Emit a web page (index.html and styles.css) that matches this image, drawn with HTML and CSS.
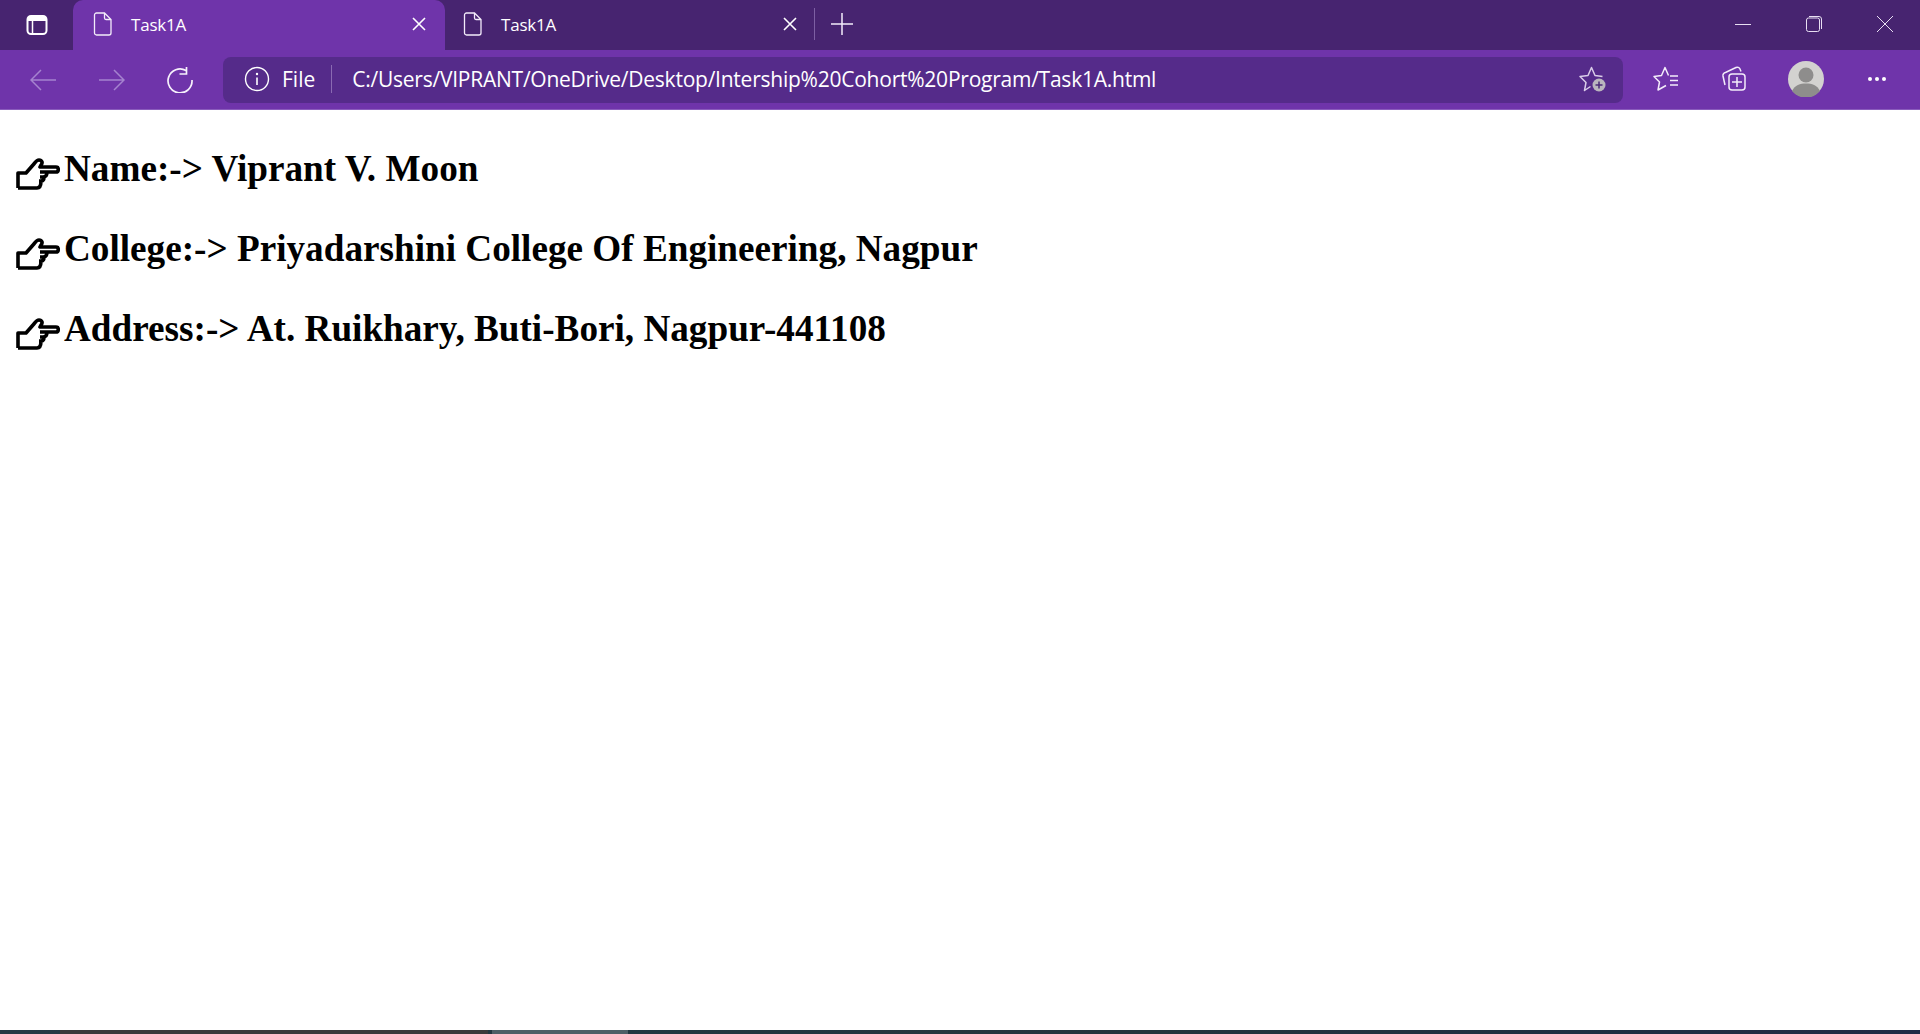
FILE: index.html
```html
<!DOCTYPE html>
<html lang="en">
<head>
    <meta charset="UTF-8">
    <meta name="viewport" content="width=device-width, initial-scale=1.0">
    <title>Task1A</title>
    <link rel="stylesheet" href="styles.css">
</head>
<body>

    <!-- Tab strip -->
    <div class="tabstrip">
        <div class="tab-actions">
            <svg class="icon" width="24" height="24" viewBox="0 0 24 24"><rect x="2.5" y="3" width="19" height="18" rx="3.5" fill="none" stroke="#fff" stroke-width="2"/><path d="M3 4h18v4H3z" fill="#fff"/><path d="M7.5 8v12" stroke="#fff" stroke-width="1.5"/></svg>
        </div>
        <div class="tab tab-active">
            <svg class="doc-icon" width="20" height="24" viewBox="0 0 20 24"><path d="M3.5 1h8l6.500 6.500V21a2 2 0 0 1-2 2H3.500a2 2 0 0 1-2-2V3a2 2 0 0 1 2-2z M11.500 1v5a1.500 1.500 0 0 0 1.500 1.500h5" fill="none" stroke="#f3ecfa" stroke-width="1.300"/></svg>
            <span class="tab-title">Task1A</span>
            <svg class="tab-close" width="14" height="14" viewBox="0 0 14 14"><path d="M1 1l12 12M13 1L1 13" stroke="#fff" stroke-width="1.600"/></svg>
        </div>
        <div class="tab tab-idle">
            <svg class="doc-icon" width="20" height="24" viewBox="0 0 20 24"><path d="M3.5 1h8l6.500 6.500V21a2 2 0 0 1-2 2H3.500a2 2 0 0 1-2-2V3a2 2 0 0 1 2-2z M11.500 1v5a1.500 1.500 0 0 0 1.500 1.500h5" fill="none" stroke="#f3ecfa" stroke-width="1.300"/></svg>
            <span class="tab-title">Task1A</span>
            <svg class="tab-close" width="14" height="14" viewBox="0 0 14 14"><path d="M1 1l12 12M13 1L1 13" stroke="#fff" stroke-width="1.600"/></svg>
        </div>
        <div class="tab-divider"></div>
        <svg class="new-tab" width="22" height="22" viewBox="0 0 22 22"><path d="M11 0v22M0 11h22" stroke="#f3ecfa" stroke-width="1.500"/></svg>
        <div class="window-controls">
            <svg width="16" height="16" viewBox="0 0 16 16"><path d="M0 8.500h16" stroke="#e8dff2" stroke-width="1"/></svg>
            <svg width="16" height="16" viewBox="0 0 16 16"><rect x=".5" y="2" width="13" height="13.500" rx="2" fill="none" stroke="#e8dff2"/><path d="M3 .5h10a2.500 2.500 0 0 1 2.500 2.500v10" fill="none" stroke="#e8dff2"/></svg>
            <svg width="16" height="16" viewBox="0 0 16 16"><path d="M0 0l16 16M16 0L0 16" stroke="#e8dff2" stroke-width="1"/></svg>
        </div>
    </div>

    <!-- Address bar row -->
    <div class="toolbar">
        <div class="nav-buttons">
            <svg class="nav-dim" width="26" height="24" viewBox="0 0 26 24"><path d="M26 12H1M11 2L1 12l10 10" fill="none" stroke="#a583cf" stroke-width="1.500"/></svg>
            <svg class="nav-dim" width="26" height="24" viewBox="0 0 26 24"><path d="M0 12h25M15 2l10 10-10 10" fill="none" stroke="#a583cf" stroke-width="1.500"/></svg>
            <svg width="26" height="26" viewBox="0 0 26 26"><path d="M19 3.500A12 12 0 1 0 25 13M19.500 0v7h-7" fill="none" stroke="#f6f1fb" stroke-width="1.700"/></svg>
        </div>
        <div class="address-bar">
            <svg width="26" height="26" viewBox="0 0 26 26"><circle cx="13" cy="13" r="11.500" fill="none" stroke="#fff" stroke-width="1.400"/><path d="M13 11.500v7.500" stroke="#fff" stroke-width="1.600"/><circle cx="13" cy="8" r="1.200" fill="#fff"/></svg>
            <span class="site-label">File</span>
            <span class="address-sep"></span>
            <span class="url">C:/Users/VIPRANT/OneDrive/Desktop/Intership%20Cohort%20Program/Task1A.html</span>
            <svg class="fav-add" width="28" height="27" viewBox="0 0 28 27"><path d="M11.500 20.500L5.500 24.500 7 16.500 1 10.500 9 9.500 12.500 1.500 16 9.500 23.500 10.500" fill="none" stroke="#d9cce8" stroke-width="1.500" stroke-linejoin="round"/><circle cx="20" cy="19" r="6.500" fill="#b9b5bd"/><path d="M20 15.500v7M16.500 19h7" stroke="#4b2a78" stroke-width="1.500"/></svg>
        </div>
        <div class="toolbar-buttons">
            <svg width="26" height="26" viewBox="0 0 26 26"><path d="M15.500 9.500L12 1.500 8.500 9.500 1 10.500 6.500 16 5 24 13 19.500M17 10h8M17 14.500h8M17 19h8" fill="none" stroke="#f3ecfa" stroke-width="1.500" stroke-linejoin="round"/></svg>
            <svg class="collections" width="26" height="26" viewBox="0 0 26 26"><path d="M5 19l-2-9a3 3 0 0 1 2.500-3.500L16 1.500a3 3 0 0 1 4 1.500l1 2.500" fill="none" stroke="#f3ecfa" stroke-width="1.500"/><rect x="9" y="8" width="16" height="16" rx="3" fill="#6f34aa" stroke="#f3ecfa" stroke-width="1.500"/><path d="M17 11v10M12 16h10" stroke="#f3ecfa" stroke-width="1.500"/></svg>
            <svg class="avatar" width="36" height="36" viewBox="0 0 36 36"><circle cx="18" cy="18" r="18" fill="#d3d2d0"/><circle cx="18" cy="14" r="7.500" fill="#8e8d8c"/><path d="M4 30c3-6 8-7.500 14-7.500S29 24 32 30a18 18 0 0 1-28 0z" fill="#8e8d8c"/></svg>
            <svg class="more" width="20" height="6" viewBox="0 0 20 6"><circle cx="3" cy="3" r="2" fill="#fff"/><circle cx="10" cy="3" r="2" fill="#fff"/><circle cx="17" cy="3" r="2" fill="#fff"/></svg>
        </div>
    </div>

    <!-- Page content -->
    <main class="page">
        <h2 class="info-line">
            <svg class="hand" width="44" height="32" viewBox="0 0 44 32"><path d="M2 30V15h8l7-8c2-2 3-5 6-5 3 0 4 3 2 5l-1 2h16c3 0 3 5 0 5H24M31 14c0 3-1 5-4 5h-3M28 19c0 3-1 4-3 4h-2M25 23c0 4-1 7-4 7H2" fill="none" stroke="#000" stroke-width="3.600" stroke-linejoin="round"/></svg>Name:-&gt; Viprant V. Moon
        </h2>
        <h2 class="info-line">
            <svg class="hand" width="44" height="32" viewBox="0 0 44 32"><path d="M2 30V15h8l7-8c2-2 3-5 6-5 3 0 4 3 2 5l-1 2h16c3 0 3 5 0 5H24M31 14c0 3-1 5-4 5h-3M28 19c0 3-1 4-3 4h-2M25 23c0 4-1 7-4 7H2" fill="none" stroke="#000" stroke-width="3.600" stroke-linejoin="round"/></svg>College:-&gt; Priyadarshini College Of Engineering, Nagpur
        </h2>
        <h2 class="info-line">
            <svg class="hand" width="44" height="32" viewBox="0 0 44 32"><path d="M2 30V15h8l7-8c2-2 3-5 6-5 3 0 4 3 2 5l-1 2h16c3 0 3 5 0 5H24M31 14c0 3-1 5-4 5h-3M28 19c0 3-1 4-3 4h-2M25 23c0 4-1 7-4 7H2" fill="none" stroke="#000" stroke-width="3.600" stroke-linejoin="round"/></svg>Address:-&gt; At. Ruikhary, Buti-Bori, Nagpur-441108
        </h2>
    </main>

    <!-- Sliver of the desktop taskbar -->
    <div class="taskbar">
        <div class="taskbar-gap"></div>
        <div class="taskbar-app"></div>
        <div class="taskbar-app-active"></div>
    </div>

</body>
</html>
```

FILE: styles.css
```css
/* Browser frame */
html, body {
    height: 100%;
}
body {
    margin: 0;
    display: flex;
    flex-direction: column;
    background-color: #fff;
    overflow: hidden;
    font-family: "Open Sans", "Noto Sans", sans-serif;
}
svg {
    display: block;
    flex-shrink: 0;
}

/* Tab strip */
.tabstrip {
    height: 50px;
    flex-shrink: 0;
    display: flex;
    align-items: center;
    background-color: #472470;
    color: #fff;
}
.tab-actions {
    width: 73px;
    display: flex;
    justify-content: center;
    padding-bottom: 1px;
}
.tab {
    height: 50px;
    display: flex;
    align-items: center;
    box-sizing: border-box;
    padding-bottom: 2px;
    font-size: 17px;
}
.tab-active {
    width: 372px;
    padding-left: 20px;
    padding-right: 19px;
    background-color: #6f34aa;
    border-radius: 10px 10px 0 0;
}
.tab-idle {
    width: 372px;
    padding-left: 18px;
    padding-right: 20px;
}
.doc-icon {
    margin-right: 18px;
}
.tab-title {
    flex: 1;
    letter-spacing: -0.2px;
}
.tab-divider {
    width: 1px;
    height: 32px;
    margin-left: -3px;
    margin-bottom: 2px;
    background-color: #7d5fa3;
}
.new-tab {
    margin-left: 16px;
    margin-bottom: 2px;
}
.window-controls {
    margin-left: auto;
    display: flex;
    gap: 55px;
    padding-right: 27px;
    padding-bottom: 2px;
    align-items: center;
}

/* Address bar row */
.toolbar {
    height: 60px;
    flex-shrink: 0;
    box-sizing: border-box;
    display: flex;
    align-items: center;
    background-color: #6f34aa;
    border-bottom: 1px solid #8a5cbc;
    color: #fff;
}
.nav-buttons {
    width: 223px;
    box-sizing: border-box;
    padding-left: 30px;
    display: flex;
    gap: 43px;
    align-items: center;
}
.nav-buttons svg:last-child {
    margin-left: -1px;
}
.address-bar {
    width: 1400px;
    height: 46px;
    box-sizing: border-box;
    padding: 0 16px 1px 21px;
    display: flex;
    align-items: center;
    background-color: #552b8a;
    border-radius: 8px;
    font-size: 21px;
}
.site-label {
    margin-left: 12px;
}
.address-sep {
    width: 1px;
    height: 28px;
    margin: 0 20px 0 16px;
    background-color: #8a6ab2;
}
.url {
    flex: 1;
    letter-spacing: -0.24px;
    white-space: nowrap;
}
.toolbar-buttons {
    flex: 1;
    display: flex;
    align-items: center;
    padding-left: 30px;
    padding-bottom: 1px;
    gap: 43px;
}
.toolbar-buttons .collections {
    margin-left: -2px;
}
.toolbar-buttons .avatar {
    margin-left: -1px;
}

/* Page content */
.page {
    flex: 1;
    padding: 0 8px;
}
.info-line {
    margin: 0;
    padding-top: 38px;
    height: 80px;
    box-sizing: border-box;
    display: flex;
    align-items: flex-start;
    font-family: "Liberation Serif", "Times New Roman", serif;
    font-size: 37.2px;
    line-height: 42px;
    font-weight: bold;
    color: #000;
    white-space: nowrap;
}
.hand {
    margin: 10px 4px 0 8px;
}

/* Desktop taskbar */
.taskbar {
    height: 4px;
    flex-shrink: 0;
    display: flex;
    background: linear-gradient(90deg, #243a44, #22343c 60%, #1f2a45);
}
.taskbar-gap {
    width: 60px;
}
.taskbar-app {
    width: 428px;
    background-color: #3a3a3a;
}
.taskbar-app-active {
    width: 136px;
    margin-left: 4px;
    background-color: #4e5f66;
}
```
